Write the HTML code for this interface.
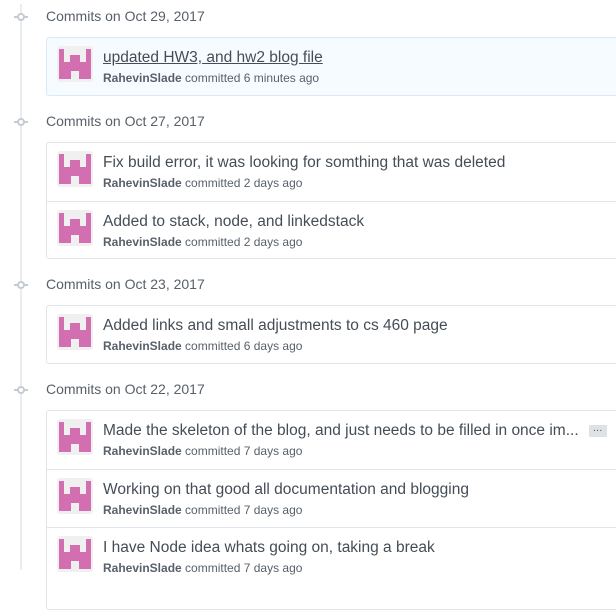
<!DOCTYPE html>
<html><head><style>
*{margin:0;padding:0;box-sizing:border-box}
body{width:616px;height:566px;overflow:hidden;background:#fff;font-family:"Liberation Sans",sans-serif;position:relative}
.line{position:absolute;left:20px;top:4px;width:2px;height:566px;background:#eaecef}
.hd{position:absolute;left:0;height:20px;width:300px}
.hd .dot{position:absolute;left:17px;top:6px;width:8px;height:8px;border:2px solid #c6cbd1;border-radius:50%;background:#fff}
.hd .bar{position:absolute;left:14px;top:9px;width:14px;height:2px;background:#c6cbd1}
.hd span{position:absolute;left:46px;top:1px;font-size:14px;color:#586069}
.box{position:absolute;left:46px;width:580px;border:1px solid #e1e4e8;border-radius:3px;background:#fff}
.box.hl{background:#f6fbff;border-color:#dbe9f7}
.row{position:relative;height:58px;border-top:1px solid #e1e4e8}
.row:first-child{border-top:none}
.av{position:absolute;left:10px;top:8px;width:36px;height:36px;border-radius:3px}
.t{position:absolute;left:56px;top:11px;font-size:15.5px;color:#444d56;white-space:nowrap}
.t.u{text-decoration:underline}
.m{position:absolute;left:56px;top:33px;font-size:12px;color:#586069;white-space:nowrap}
.m b{color:#586069;font-weight:bold}
.dots{display:inline-block;margin-left:10px;background:#dfe2e5;font-size:10px;padding:0 4px;height:12px;line-height:8px;vertical-align:middle;border-radius:1px;color:#444d56}
</style></head><body>
<div class="line"></div>
<svg width="0" height="0" style="position:absolute"><defs><g id="a"><rect width="36" height="36" fill="#f0f0f0"/><g fill="#d36fb0"><rect x="2" y="3" width="5" height="13"/><rect x="29" y="3" width="5" height="13"/><rect x="13" y="9" width="10" height="7"/><rect x="2" y="16" width="32" height="9"/><rect x="2" y="25" width="12" height="8"/><rect x="22" y="25" width="12" height="8"/></g></g></defs></svg>

<div class="hd" style="top:7px"><div class="bar"></div><div class="dot"></div><span>Commits on Oct 29, 2017</span></div>
<div class="box hl" style="top:37px;height:59px">
<div class="row"><svg class="av" viewBox="0 0 36 36"><use href="#a"/></svg><div class="t u">updated HW3, and hw2 blog file</div><div class="m"><b>RahevinSlade</b> committed 6 minutes ago</div></div>
</div>

<div class="hd" style="top:112px"><div class="bar"></div><div class="dot"></div><span>Commits on Oct 27, 2017</span></div>
<div class="box" style="top:142px;height:117px">
<div class="row"><svg class="av" viewBox="0 0 36 36"><use href="#a"/></svg><div class="t">Fix build error, it was looking for somthing that was deleted</div><div class="m"><b>RahevinSlade</b> committed 2 days ago</div></div>
<div class="row"><svg class="av" viewBox="0 0 36 36"><use href="#a"/></svg><div class="t">Added to stack, node, and linkedstack</div><div class="m"><b>RahevinSlade</b> committed 2 days ago</div></div>
</div>

<div class="hd" style="top:275px"><div class="bar"></div><div class="dot"></div><span>Commits on Oct 23, 2017</span></div>
<div class="box" style="top:305px;height:59px">
<div class="row"><svg class="av" viewBox="0 0 36 36"><use href="#a"/></svg><div class="t">Added links and small adjustments to cs 460 page</div><div class="m"><b>RahevinSlade</b> committed 6 days ago</div></div>
</div>

<div class="hd" style="top:380px"><div class="bar"></div><div class="dot"></div><span>Commits on Oct 22, 2017</span></div>
<div class="box" style="top:410px;height:200px">
<div class="row"><svg class="av" viewBox="0 0 36 36"><use href="#a"/></svg><div class="t">Made the skeleton of the blog, and just needs to be filled in once im...<span class="dots">…</span></div><div class="m"><b>RahevinSlade</b> committed 7 days ago</div></div>
<div class="row"><svg class="av" viewBox="0 0 36 36"><use href="#a"/></svg><div class="t">Working on that good all documentation and blogging</div><div class="m"><b>RahevinSlade</b> committed 7 days ago</div></div>
<div class="row"><svg class="av" viewBox="0 0 36 36"><use href="#a"/></svg><div class="t">I have Node idea whats going on, taking a break</div><div class="m"><b>RahevinSlade</b> committed 7 days ago</div></div>
</div>
</body></html>
